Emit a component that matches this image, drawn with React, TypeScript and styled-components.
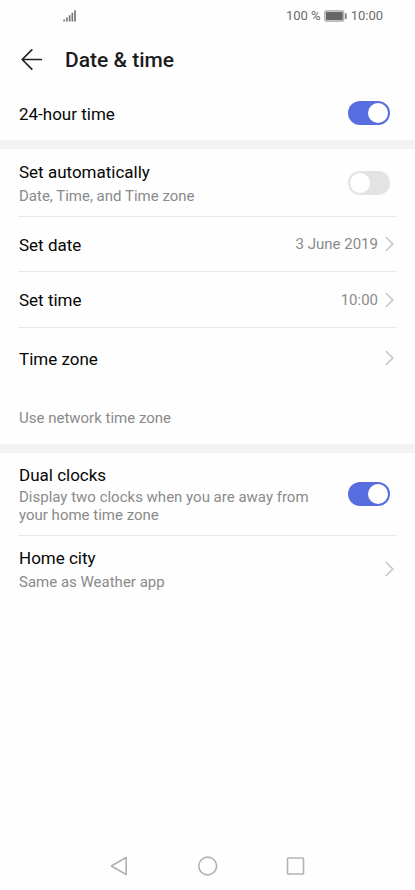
import React, { useState } from "react";
import styled, { createGlobalStyle } from "styled-components";

const GlobalStyle = createGlobalStyle`
  * { box-sizing: border-box; }
  body { margin: 0; background: #fefefe; }
  button { font: inherit; color: inherit; background: none; border: 0; padding: 0; text-align: left; cursor: pointer; }
  svg { display: block; flex: none; }
`;

const Screen = styled.div`
  display: flex;
  flex-direction: column;
  min-height: 100vh;
  font-family: Roboto, "Liberation Sans", sans-serif;
  color: #060606;
`;

const StatusBar = styled.div`
  display: flex;
  align-items: center;
  justify-content: space-between;
  height: 32px;
  padding: 0 32px 0 63px;
  font-size: 13px;
  line-height: 16px;
  color: #6a6a6a;
`;

const StatusGroup = styled.div`
  display: flex;
  align-items: center;
  gap: 3px;
`;

const Header = styled.header`
  display: flex;
  align-items: center;
  gap: 21px;
  height: 55px;
  padding: 0 21px;
`;

const Title = styled.h1`
  margin: 0;
  font-size: 21px;
  line-height: 28px;
  font-weight: 500;
  color: #1c1c1c;
`;

const Main = styled.main`
  flex: 1;
`;

const Section = styled.section`
  padding: 0 18px 1px;

  & + & {
    border-top: 9px solid #f3f3f3;
  }
`;

const Row = styled.div<{ $height: number }>`
  display: flex;
  align-items: center;
  gap: 7px;
  width: 100%;
  min-height: ${(p) => p.$height}px;

  & + & {
    border-top: 1px solid #e9e9e9;
  }
`;

const Labels = styled.span<{ $compact?: boolean }>`
  flex: 1;
  display: flex;
  flex-direction: column;
  gap: ${(p) => (p.$compact ? 3 : 5)}px;
  padding: 1px 0 0 1px;
`;

const Label = styled.label`
  font-size: 17px;
  line-height: 20px;
`;

const Detail = styled.span`
  max-width: 300px;
  font-size: 15px;
  line-height: 18px;
  color: #8a8a8a;
`;

const Value = styled(Detail)``;

const Note = styled.p`
  margin: 0;
  padding: 21px 0 16px 1px;
  font-size: 15px;
  line-height: 18px;
  color: #8a8a8a;
`;

const Switch = styled.input`
  appearance: none;
  flex: none;
  display: flex;
  width: 42px;
  height: 24px;
  margin: 0 7px 0 0;
  padding: 2px;
  border-radius: 12px;
  background: #e3e3e3;
  cursor: pointer;

  &::before {
    content: "";
    width: 20px;
    height: 20px;
    border-radius: 50%;
    background: #fff;
  }

  &:checked {
    justify-content: flex-end;
    background: #586ee0;
  }
`;

const ChevronIcon = styled.svg`
  margin-right: 3px;
`;

const NavBar = styled.nav`
  display: flex;
  justify-content: center;
  align-items: center;
  gap: 68px;
  height: 48px;
  color: #b2b2b2;
`;

function Chevron() {
  return (
    <ChevronIcon width="9" height="16" viewBox="0 0 9 16" fill="none" stroke="#c8c8c8" strokeWidth="1.7" aria-hidden="true">
      <path d="M0.8 1 7.8 8 0.8 15" />
    </ChevronIcon>
  );
}

interface ToggleRowProps {
  id: string;
  label: string;
  detail?: string;
  compact?: boolean;
  initial: boolean;
  height: number;
}

function ToggleRow({ id, label, detail, compact, initial, height }: ToggleRowProps) {
  const [on, setOn] = useState(initial);
  return (
    <Row $height={height}>
      <Labels $compact={compact}>
        <Label htmlFor={id}>{label}</Label>
        {detail && <Detail id={`${id}-detail`}>{detail}</Detail>}
      </Labels>
      <Switch
        id={id}
        type="checkbox"
        role="switch"
        checked={on}
        aria-describedby={detail ? `${id}-detail` : undefined}
        onChange={(e) => setOn(e.target.checked)}
      />
    </Row>
  );
}

interface LinkRowProps {
  label: string;
  detail?: string;
  value?: string;
  height: number;
}

function LinkRow({ label, detail, value, height }: LinkRowProps) {
  return (
    <Row as="button" type="button" $height={height}>
      <Labels>
        <Label as="span">{label}</Label>
        {detail && <Detail>{detail}</Detail>}
      </Labels>
      {value && <Value>{value}</Value>}
      <Chevron />
    </Row>
  );
}

export default function App() {
  return (
    <Screen>
      <GlobalStyle />
      <StatusBar>
        <svg width="14" height="12" viewBox="0 0 14 12" fill="#777" role="img" aria-label="Signal strength">
          <path d="M0.3 9.5H2V11.5H0.3zM3 7.5H4.7V11.5H3zM5.8 5.2H7.5V11.5H5.8zM8.5 2.8H10.2V11.5H8.5zM11.2 0.3H12.9V11.5H11.2z" />
        </svg>
        <StatusGroup>
          <span>100 %</span>
          <svg width="24" height="12" viewBox="0 0 24 12" role="img" aria-label="Battery full">
            <rect x="0.8" y="0.8" width="19" height="10.4" rx="1.2" fill="none" stroke="#999" />
            <rect x="1.8" y="1.8" width="17" height="8.4" fill="#666" />
            <rect x="21" y="3.2" width="1.6" height="5.8" rx="0.5" fill="#777" />
          </svg>
          <span>10:00</span>
        </StatusGroup>
      </StatusBar>
      <Header>
        <button type="button" aria-label="Back">
          <svg width="23" height="22" viewBox="0 0 23 22" fill="none" stroke="#222" strokeWidth="1.7" strokeLinecap="round" strokeLinejoin="round">
            <path d="M10.8 0.9 1.2 10.5 10.8 20.1M1.2 10.5H20.3" />
          </svg>
        </button>
        <Title>Date &amp; time</Title>
      </Header>
      <Main>
        <Section>
          <ToggleRow id="hour24" label="24-hour time" initial height={52} />
        </Section>
        <Section>
          <ToggleRow id="auto" label="Set automatically" detail="Date, Time, and Time zone" initial={false} height={67} />
          <LinkRow label="Set date" value="3 June 2019" height={55} />
          <LinkRow label="Set time" value="10:00" height={56} />
          <LinkRow label="Time zone" height={61} />
          <Note>Use network time zone</Note>
        </Section>
        <Section>
          <ToggleRow id="dual" label="Dual clocks" detail="Display two clocks when you are away from your home time zone" compact initial height={82} />
          <LinkRow label="Home city" detail="Same as Weather app" height={67} />
        </Section>
      </Main>
      <NavBar>
        <button type="button" aria-label="Back">
          <svg width="20" height="20" viewBox="0 0 20 20" fill="none" stroke="currentColor" strokeWidth="1.6" strokeLinejoin="round">
            <path d="M16.2 1.5V18.5L1.3 10z" />
          </svg>
        </button>
        <button type="button" aria-label="Home">
          <svg width="20" height="20" viewBox="0 0 20 20" fill="none" stroke="currentColor" strokeWidth="1.6">
            <circle cx="9.7" cy="10" r="8.9" />
          </svg>
        </button>
        <button type="button" aria-label="Recent apps">
          <svg width="20" height="20" viewBox="0 0 20 20" fill="none" stroke="currentColor" strokeWidth="1.6">
            <rect x="1.5" y="2" width="16" height="16" rx="0.8" />
          </svg>
        </button>
      </NavBar>
    </Screen>
  );
}
